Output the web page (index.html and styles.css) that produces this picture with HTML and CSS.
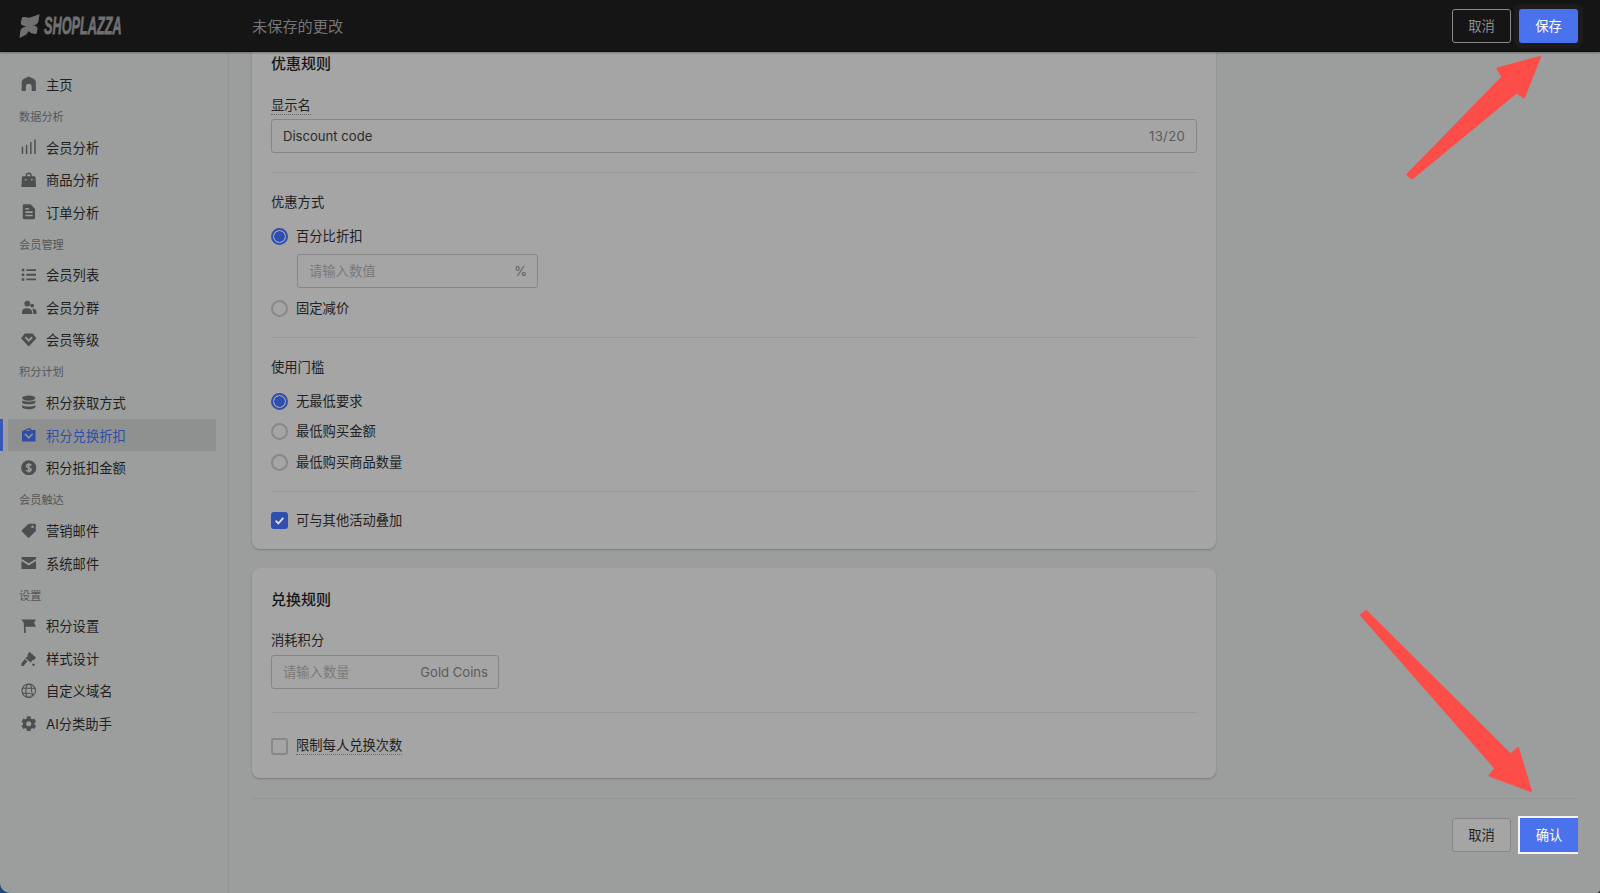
FILE: index.html
```html
<!DOCTYPE html>
<html lang="zh-CN">
<head>
<meta charset="utf-8">
<title>积分兑换折扣</title>
<link rel="stylesheet" href="styles.css">
</head>
<body>
<div class="app">
  <header class="topbar">
    <div class="logo">
      <svg class="logo-mark" viewBox="0 0 21 24"><path d="M3 3.500 C6 2 8 4.500 11 3.500 C14 2.500 17 1.500 20.500 0 L19.500 7 C19 10 16 11.500 13.500 11.500 C16 12 19 12 18.500 15.500 L17.500 20 C13.500 20 11 19 9.500 17 C9 20 5 22 .5 24 L1.500 16 C2 14 5 13 7.500 12 C4 12 1 11 2 8 Z"/></svg>
      <span class="logo-text">SHOPLAZZA</span>
    </div>
    <div class="unsaved">未保存的更改</div>
    <div class="top-actions">
      <button class="btn btn-dark">取消</button>
      <button class="btn btn-primary btn-halo">保存</button>
    </div>
  </header>
  <div class="body">
    <nav class="sidebar">
      <a class="nav-item"><svg class="ic" viewBox="0 0 16 16"><path d="M8 .5 L13.500 3 Q15.300 4.200 15.300 6.500 V15.500 H11 V11 A3 3 0 0 0 5 11 V15.500 H.7 V6.500 Q.7 4.200 2.500 3 Z"/></svg>主页</a>
      <div class="nav-section">数据分析</div>
      <a class="nav-item"><svg class="ic" viewBox="0 0 16 16"><path d="M.8 8h1.500v7.500H.8zM5 6h1.500v9.500H5zM9.400 3h1.500v12.500H9.400zM13.700.5h1.500v15h-1.500z"/></svg>会员分析</a>
      <a class="nav-item"><svg class="ic" viewBox="0 0 16 16"><path fill-rule="evenodd" d="M4.800 4.500V3.800a3.200 3.200 0 0 1 6.400 0v.7h2.600q1.100 0 1.200 1.100l.6 9.900H.4L1 5.600q.1-1.100 1.200-1.100zM6.200 4.500h3.600V3.800a1.800 1.800 0 0 0-3.600 0zM4.800 7a.9.9 0 1 0 0 1.800.9.9 0 0 0 0-1.800zm6.400 0a.9.9 0 1 0 0 1.800.9.9 0 0 0 0-1.800z"/></svg>商品分析</a>
      <a class="nav-item"><svg class="ic" viewBox="0 0 16 16"><path fill-rule="evenodd" d="M3 .3h6.800l4.700 4.700v9.500q0 1.200-1.200 1.200H3q-1.200 0-1.200-1.200V1.500Q1.800.3 3 .3zM4.500 7.500v1.700h7.500V7.500zM4.500 11v1.700h7.500V11zM4.500 4v1.700H8V4z"/></svg>订单分析</a>
      <div class="nav-section">会员管理</div>
      <a class="nav-item"><svg class="ic" viewBox="0 0 16 16"><path d="M.8 1.800h2.600v2.600H.8zM5.500 2.200H15.500v1.900H5.500zM.8 6.700h2.600v2.600H.8zM5.500 7H15.500v2H5.500zM.8 11.600h2.600v2.600H.8zM5.500 11.900H15.500v1.900H5.500z"/></svg>会员列表</a>
      <a class="nav-item"><svg class="ic" viewBox="0 0 16 16"><circle cx="6.500" cy="3.700" r="3"/><circle cx="11.500" cy="5.800" r="2"/><path d="M1 14.500V12.500q0-4 5-4t5.500 4v2zM12.500 14.500V12q0-1.800-1-3 4.500-.3 4.500 3v2.500z"/></svg>会员分群</a>
      <a class="nav-item"><svg class="ic" viewBox="0 0 16 16"><path fill-rule="evenodd" d="M4 1.500h8L16 6.500l-8 8.500-8-8.500zM3.800 6 8 10.300 12.200 6l-1.400-1.300L8 7.500 5.200 4.700z"/></svg>会员等级</a>
      <div class="nav-section">积分计划</div>
      <a class="nav-item"><svg class="ic" viewBox="0 0 16 16"><ellipse cx="8" cy="3.200" rx="6.800" ry="2.700"/><path d="M1.200 5.800C3 7.400 13 7.400 14.800 5.800V8C13 10.200 3 10.200 1.200 8zM1.200 10.500C3 12.200 13 12.200 14.800 10.500V12.800C13 15.200 3 15.200 1.200 12.800z"/></svg>积分获取方式</a>
      <a class="nav-item is-active"><svg class="ic" viewBox="0 0 16 16"><path fill-rule="evenodd" d="M1 4.500 L8.500 .8 L11.500 3 H15 V15 H1 Z M4.600 6.500 L3.400 7.800 L8 12.300 L12.600 7.800 L11.400 6.500 L8 9.800 Z M4.500 3.800 L8.200 2.200 L9.500 3.800 Z"/></svg>积分兑换折扣</a>
      <a class="nav-item"><svg class="ic" viewBox="0 0 16 16"><circle cx="8" cy="8" r="7.800"/><path class="ic-cut" d="M10.700 5.600C10 4.300 5.800 4 5.500 6c-.3 2.200 5.200 1.800 5 4-.2 2-4.700 1.700-5.200.4M8 3v10"/></svg>积分抵扣金额</a>
      <div class="nav-section">会员触达</div>
      <a class="nav-item"><svg class="ic" viewBox="0 0 16 16"><path fill-rule="evenodd" d="M8.500.8h5.500q1.300 0 1.300 1.300v5.500q0 .7-.5 1.200L8.500 15q-.8.700-1.500 0L1 8.800q-.7-.7 0-1.500L7.300 1.300Q7.800.8 8.500.8zm3.300 1.700a1.300 1.300 0 1 0 0 2.600 1.300 1.300 0 0 0 0-2.600z"/></svg>营销邮件</a>
      <a class="nav-item"><svg class="ic" viewBox="0 0 16 16"><path d="M.5 2h15v2L8 8.500.5 4zM.5 6.300 8 10.800l7.500-4.500V14.500H.5z"/></svg>系统邮件</a>
      <div class="nav-section">设置</div>
      <a class="nav-item"><svg class="ic" viewBox="0 0 16 16"><path d="M.5 1.500h15L13.500 5l2 4H4.600L5 15.500H3.300L2.800 5z"/></svg>积分设置</a>
      <a class="nav-item"><svg class="ic" viewBox="0 0 16 16"><path d="M8.700.8 15.500 6.800 13 9.800l-1.300-.8-1.500 3L4.500 7l2.700-1.500L6.600 4zM4 8.300l2.600 2.300L2.500 15.500.4 15.500V13zM12.900 12.800a1.300 1.300 0 1 0 .01 0z"/></svg>样式设计</a>
      <a class="nav-item"><svg class="ic ic-line" viewBox="0 0 16 16"><circle cx="8" cy="8" r="7"/><ellipse cx="8" cy="8" rx="3" ry="7"/><path d="M1.300 5.500h13.400M1.300 10.500h13.400"/><path class="ic-cursor" d="M9.500 9.500 15.500 11.500 13 12.800 12 15.500z"/></svg>自定义域名</a>
      <a class="nav-item"><svg class="ic" viewBox="0 0 16 16"><circle class="ic-ring" cx="8" cy="8" r="4.300"/><rect x="6" y=".4" width="4" height="3.500"/><rect x="6" y=".4" width="4" height="3.500" transform="rotate(60 8 8)"/><rect x="6" y=".4" width="4" height="3.500" transform="rotate(120 8 8)"/><rect x="6" y=".4" width="4" height="3.500" transform="rotate(180 8 8)"/><rect x="6" y=".4" width="4" height="3.500" transform="rotate(240 8 8)"/><rect x="6" y=".4" width="4" height="3.500" transform="rotate(300 8 8)"/></svg>AI分类助手</a>
    </nav>
    <main class="main">
      <section class="card card-first">
        <h2 class="card-title">优惠规则</h2>
        <div class="label label-first"><span class="dotted">显示名</span></div>
        <div class="field field-full"><span class="value">Discount code</span><span class="suffix suffix-count">13/20</span></div>
        <hr class="rule rule-a">
        <div class="label">优惠方式</div>
        <div class="options options-a">
          <div class="opt"><span class="radio is-on"></span>百分比折扣</div>
          <div class="field field-pct"><span class="ph">请输入数值</span><span class="suffix">%</span></div>
          <div class="opt"><span class="radio"></span>固定减价</div>
        </div>
        <hr class="rule rule-b">
        <div class="label">使用门槛</div>
        <div class="options options-b">
          <div class="opt"><span class="radio is-on"></span>无最低要求</div>
          <div class="opt"><span class="radio"></span>最低购买金额</div>
          <div class="opt"><span class="radio"></span>最低购买商品数量</div>
        </div>
        <hr class="rule rule-c">
        <div class="opt"><span class="check is-on"><svg viewBox="0 0 12 12"><path d="M2.500 6.200 5 8.600 9.500 3.600"/></svg></span>可与其他活动叠加</div>
      </section>
      <section class="card card-second">
        <h2 class="card-title">兑换规则</h2>
        <div class="label label-gap">消耗积分</div>
        <div class="field field-coins"><span class="ph">请输入数量</span><span class="suffix">Gold Coins</span></div>
        <hr class="rule rule-d">
        <div class="opt"><span class="check"></span><span class="dotted">限制每人兑换次数</span></div>
      </section>
      <footer class="page-foot">
        <button class="btn btn-light">取消</button>
        <button class="btn btn-primary btn-framed">确认</button>
      </footer>
    </main>
  </div>
</div>
<svg class="arrows" viewBox="0 0 1600 893">
  <path d="M1407.500 174.500 1502.500 77 1497.500 68.500 1540 57 1524 97.500 1516.500 92.500 1412 178.500Z"/>
  <path d="M1361 615 1366 611 1510.500 754.500 1518 748 1531 791 1489.500 775.500 1495.500 768.500Z"/>
</svg>
</body>
</html>
```
FILE: styles.css
```css
* { box-sizing: border-box; }
html { background: linear-gradient(90deg, #1c4a80 50%, #23262b 50%); }
html, body { margin: 0; height: 893px; overflow: hidden; }
body {
  position: relative;
  font-family: Inter, "Noto Sans CJK SC", "Liberation Sans", sans-serif;
  font-size: 13.3px;
  color: #222;
}
.app {
  height: 893px;
  display: flex;
  flex-direction: column;
  background: #9b9e9d;
  border-radius: 0 0 4px 10px;
  overflow: hidden;
}

/* top bar */
.topbar {
  flex: none;
  height: 52px;
  display: flex;
  align-items: center;
  background: #151515;
  border-bottom: 1px solid #0c0c0c;
  padding: 0 22px 0 19px;
  box-shadow: 0 1px 2px rgba(0,0,0,.3);
  position: relative;
  z-index: 2;
}
.logo { width: 233px; display: flex; align-items: center; gap: 4px; color: #707070; }
.logo-mark { width: 21px; height: 24px; fill: #707070; flex: none; }
.logo-text {
  display: inline-block;
  width: 78px;
  white-space: nowrap;
  font-family: "Liberation Sans", sans-serif;
  font-weight: 700;
  font-style: italic;
  font-size: 23.500px;
  line-height: 24px;
  -webkit-text-stroke: .8px #707070;
  transform: scaleX(.54);
  transform-origin: left center;
}
.unsaved { font-size: 15.200px; color: #757575; padding-bottom: 2px; }
.top-actions { margin-left: auto; display: flex; gap: 8px; }

/* buttons */
.btn {
  width: 59px;
  height: 34px;
  padding: 0 0 1px;
  border-radius: 3px;
  font: inherit;
  font-size: 13.300px;
}
.btn-dark { background: #151515; border: 1.500px solid #8a8a8a; color: #8e8e8e; }
.btn-light { background: #a5a5a5; border: 1px solid #858585; color: #222; }
.btn-primary { background: #4a72ec; border: 0; color: #fff; }
.btn-halo { box-shadow: 0 0 0 5px #1c1c1c; position: relative; }
.btn-framed {
  height: 38px;
  margin-top: -2px;
  margin-left: -1px;
  width: 60px;
  border-radius: 0;
  border: 2px solid #f5f5f5;
  border-right: 0;
}

/* layout */
.body { flex: 1; display: flex; min-height: 0; }
.sidebar {
  flex: none;
  width: 229px;
  border-right: 1px solid #939695;
  padding: 16px 0 0;
  display: flex;
  flex-direction: column;
}
.nav-item {
  height: 32.450px;
  margin: 0 12px 0 8px;
  padding-left: 13px;
  display: flex;
  align-items: center;
  gap: 9.500px;
  color: #1f1f1f;
  position: relative;
}
.nav-section {
  height: 30.500px;
  padding-left: 19px;
  display: flex;
  align-items: center;
  font-size: 11.200px;
  color: #565656;
}
.ic { width: 15.500px; height: 15.500px; flex: none; fill: #4c4e4f; }
.ic-cut { fill: none; stroke: #9b9e9d; stroke-width: 1.600; }
.ic-ring { fill: none; stroke: #4c4e4f; stroke-width: 3.400; }
.ic-line { fill: none; stroke: #4c4e4f; stroke-width: 1.100; }
.ic-cursor { fill: #4c4e4f; stroke: #9b9e9d; stroke-width: .8; }
.is-active { background: #8f9191; color: #2f4ea8; }
.is-active .ic { fill: #2f4ea8; }
.is-active::before {
  content: "";
  position: absolute;
  left: -8px;
  top: 0;
  bottom: 0;
  width: 3px;
  background: #3a58b8;
}

/* main */
.main { flex: 1; min-width: 0; padding: 0 22px 0 23px; }
.card {
  width: 964px;
  background: #a5a5a5;
  padding: 0 19px;
  box-shadow: 0 1px 2px rgba(0,0,0,.22);
}
.card-first { height: 497px; padding-top: 1px; border-radius: 0 0 8px 8px; }
.card-second { height: 210px; margin-top: 19px; padding-top: 21px; border-radius: 8px; }
.card-title { margin: 0; font-size: 15px; line-height: 22px; font-weight: 500; color: #161616; }
.label { line-height: 20px; color: #222; }
.label-first { margin: 20px 0 4px; }
.label-gap { margin: 19px 0 5px; }
.dotted { border-bottom: 1px dotted #666; display: inline-block; line-height: 18px; }
.rule { height: 1px; border: 0; background: #979797; margin: 0; }
.rule-a { margin: 19px 0; }
.rule-b { margin: 13px 0 19px; }
.rule-c { margin: 13px 0 14px; }
.rule-d { margin: 23px 0 18px; }

.field {
  height: 34px;
  border: 1px solid #858585;
  border-radius: 3px;
  display: flex;
  align-items: center;
  justify-content: space-between;
  padding: 0 11px;
  font-size: 13.100px;
}
.field-full { width: 100%; }
.field-pct { width: 241px; margin: 2px 0 6px 26px; padding-right: 10px; }
.field-coins { width: 228px; padding-right: 10px; padding-bottom: 1px; }
.value { color: #2b2b2b; }
.ph { color: #797979; font-size: 13.300px; }
.suffix { color: #5c5c5c; }
.suffix-count { letter-spacing: .3px; }

.options-a { margin-top: 9px; }
.options-b { margin-top: 9px; }
.opt { height: 30.500px; display: flex; align-items: center; gap: 8px; padding-bottom: 2px; color: #222; }
.radio {
  width: 17px;
  height: 17px;
  flex: none;
  margin-top: 2px;
  border-radius: 50%;
  border: 2px solid #888;
}
.radio.is-on { border-color: #2f4fb0; background: radial-gradient(circle, #2f4fb0 0 5px, transparent 5.500px); }
.check {
  width: 17px;
  height: 17px;
  flex: none;
  margin-top: 2px;
  border-radius: 3px;
  border: 2px solid #888;
  display: flex;
}
.check.is-on { background: #2f4fb0; border-color: #2f4fb0; }
.check svg { fill: none; stroke: #ddd; stroke-width: 1.700; width: 13px; height: 13px; }

.page-foot {
  margin-top: 20px;
  padding-top: 19px;
  border-top: 1px solid #939695;
  display: flex;
  justify-content: flex-end;
  gap: 8px;
}

/* annotation arrows over the page */
.arrows {
  position: absolute;
  left: 0;
  top: 0;
  width: 1600px;
  height: 893px;
  pointer-events: none;
  fill: #fc4d49;
  stroke: #fc4d49;
  stroke-width: 2;
  stroke-linejoin: round;
}
```
